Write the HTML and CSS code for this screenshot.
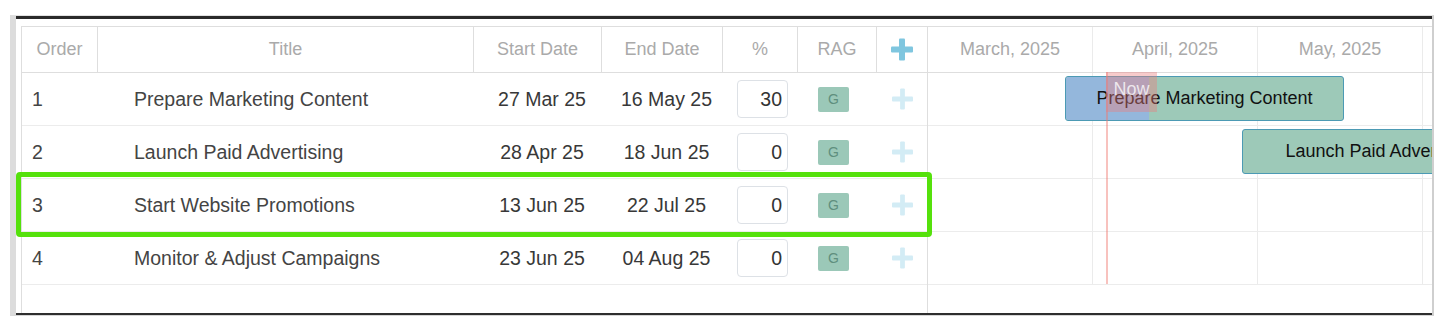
FILE: index.html
```html
<!DOCTYPE html>
<html lang="en">
<head>
    <meta charset="UTF-8">
    <title>Campaign Planner</title>
    <link rel="stylesheet" href="styles.css">
</head>
<body>
    <div class="frame">
        <div class="topbar"></div>
        <div class="content">
            <div class="planner">
                <div class="grid-side">
                    <div class="head">
                        <div class="cell c-order">Order</div>
                        <div class="cell c-title">Title</div>
                        <div class="cell c-date">Start Date</div>
                        <div class="cell c-date">End Date</div>
                        <div class="cell c-pct">%</div>
                        <div class="cell c-rag">RAG</div>
                        <div class="cell c-add">
                            <svg class="plus" viewBox="0 0 22 22" width="22" height="23"><rect x="8" y="0" width="6" height="22" rx="1"/><rect x="0" y="8" width="22" height="6" rx="1"/></svg>
                        </div>
                    </div>
                    <div class="row">
                        <div class="cell c-order">1</div>
                        <div class="cell c-title">Prepare Marketing Content</div>
                        <div class="cell c-date">27 Mar 25</div>
                        <div class="cell c-date">16 May 25</div>
                        <div class="cell c-pct"><input class="pct" type="text" value="30"></div>
                        <div class="cell c-rag"><span class="rag">G</span></div>
                        <div class="cell c-add"><svg class="plus light" viewBox="0 0 22 22" width="21" height="22"><rect x="8.5" y="0" width="5" height="22" rx="1"/><rect x="0" y="8.5" width="22" height="5" rx="1"/></svg></div>
                    </div>
                    <div class="row">
                        <div class="cell c-order">2</div>
                        <div class="cell c-title">Launch Paid Advertising</div>
                        <div class="cell c-date">28 Apr 25</div>
                        <div class="cell c-date">18 Jun 25</div>
                        <div class="cell c-pct"><input class="pct" type="text" value="0"></div>
                        <div class="cell c-rag"><span class="rag">G</span></div>
                        <div class="cell c-add"><svg class="plus light" viewBox="0 0 22 22" width="21" height="22"><rect x="8.5" y="0" width="5" height="22" rx="1"/><rect x="0" y="8.5" width="22" height="5" rx="1"/></svg></div>
                    </div>
                    <div class="row">
                        <div class="cell c-order">3</div>
                        <div class="cell c-title">Start Website Promotions</div>
                        <div class="cell c-date">13 Jun 25</div>
                        <div class="cell c-date">22 Jul 25</div>
                        <div class="cell c-pct"><input class="pct" type="text" value="0"></div>
                        <div class="cell c-rag"><span class="rag">G</span></div>
                        <div class="cell c-add"><svg class="plus light" viewBox="0 0 22 22" width="21" height="22"><rect x="8.5" y="0" width="5" height="22" rx="1"/><rect x="0" y="8.5" width="22" height="5" rx="1"/></svg></div>
                    </div>
                    <div class="row">
                        <div class="cell c-order">4</div>
                        <div class="cell c-title">Monitor &amp; Adjust Campaigns</div>
                        <div class="cell c-date">23 Jun 25</div>
                        <div class="cell c-date">04 Aug 25</div>
                        <div class="cell c-pct"><input class="pct" type="text" value="0"></div>
                        <div class="cell c-rag"><span class="rag">G</span></div>
                        <div class="cell c-add"><svg class="plus light" viewBox="0 0 22 22" width="21" height="22"><rect x="8.5" y="0" width="5" height="22" rx="1"/><rect x="0" y="8.5" width="22" height="5" rx="1"/></svg></div>
                    </div>
                </div>

                <div class="gantt">
                    <div class="months">
                        <div class="month">March, 2025</div>
                        <div class="month">April, 2025</div>
                        <div class="month">May, 2025</div>
                        <div class="month">June, 2025</div>
                    </div>
                    <div class="lanes">
                        <div class="lane">
                            <div class="mcell"></div><div class="mcell"></div><div class="mcell"></div><div class="mcell"></div>
                            <div class="bar" style="left: 137px; width: 279px;">
                                <div class="progress" style="width: 30%;"></div>
                                <span class="bar-label">Prepare Marketing Content</span>
                            </div>
                        </div>
                        <div class="lane">
                            <div class="mcell"></div><div class="mcell"></div><div class="mcell"></div><div class="mcell"></div>
                            <div class="bar" style="left: 314px; width: 280px;">
                                <span class="bar-label">Launch Paid Advertising</span>
                            </div>
                        </div>
                        <div class="lane">
                            <div class="mcell"></div><div class="mcell"></div><div class="mcell"></div><div class="mcell"></div>
                        </div>
                        <div class="lane">
                            <div class="mcell"></div><div class="mcell"></div><div class="mcell"></div><div class="mcell"></div>
                        </div>
                        <div class="now-line" style="left: 178px;"></div>
                        <div class="now-tag" style="left: 178px;">Now</div>
                    </div>
                </div>
            </div>
        </div>
        <div class="bottombar"></div>
        <div class="highlight"></div>
    </div>
</body>
</html>
```

FILE: styles.css
```css
body {
    margin: 0;
    font-family: "Liberation Sans", Arial, sans-serif;
    background: #fff;
}
.frame {
    position: relative;
    margin: 15px 0 0 10px;
    width: 1416px;
    border-left: 6px solid #dcdcdc;
    border-right: 2px solid #cfcfcf;
    border-top: 1px solid #e2e2e2;
    border-bottom: 1px solid #d6d6d6;
}
.topbar {
    height: 3px;
    background: #2a2a2a;
}
.bottombar {
    height: 2px;
    background: #2e2e2e;
}
.content {
    padding: 7px 0 0 5px;
}
.planner {
    display: flex;
    height: 286px;
    border-top: 1px solid #dedede;
    overflow: hidden;
}
.grid-side {
    width: 906px;
    flex: none;
    box-sizing: border-box;
    border-left: 1px solid #dedede;
}
.head, .row {
    display: grid;
    grid-template-columns: 76px 376px 128px 121px 75px 79px 50px;
}
.head {
    height: 46px;
    box-sizing: border-box;
    border-bottom: 1px solid #dedede;
}
.head .cell {
    box-sizing: border-box;
    border-right: 1px solid #dedede;
    justify-content: center;
    font-size: 18px;
    color: #aaa;
}
.head .cell.c-add {
    border-right: none;
}
.row {
    height: 53px;
    box-sizing: border-box;
    border-bottom: 1px solid #ececec;
}
.cell {
    display: flex;
    align-items: center;
    font-size: 19.5px;
    color: #444;
    white-space: nowrap;
}
.row .c-order { padding-left: 10px; }
.row .c-title { padding-left: 36px; }
.row .c-date { justify-content: center; padding-left: 8px; color: #383838; }
.row .c-pct { padding-left: 14px; }
.row .c-rag { padding-left: 20px; }
.head .c-add, .row .c-add { justify-content: center; padding-left: 0; }
.pct {
    width: 51px;
    height: 38px;
    box-sizing: border-box;
    border: 1px solid #dde1e6;
    border-radius: 4px;
    padding: 0 5px 0 0;
    text-align: right;
    font-family: inherit;
    font-size: 19.5px;
    color: #333;
    background: #fff;
}
.rag {
    display: inline-flex;
    align-items: center;
    justify-content: center;
    width: 31px;
    height: 25px;
    border-radius: 2px;
    background: #9bc8b8;
    color: #5f8f7e;
    font-size: 14px;
}
.plus { fill: #7fc6df; }
.plus.light { fill: #d3ecf5; }

.gantt {
    flex: 1;
    min-width: 0;
    border-left: 1px solid #dedede;
    overflow: hidden;
}
.months {
    display: flex;
    height: 46px;
    box-sizing: border-box;
    border-bottom: 1px solid #dedede;
}
.month, .mcell {
    width: 165px;
    flex: none;
    box-sizing: border-box;
    border-right: 1px solid #ebebeb;
}
.month {
    display: flex;
    align-items: center;
    justify-content: center;
    font-size: 18px;
    color: #aaa;
    white-space: nowrap;
}
.lanes {
    position: relative;
}
.lane {
    position: relative;
    display: flex;
    height: 53px;
    box-sizing: border-box;
    border-bottom: 1px solid #ececec;
}
.bar {
    position: absolute;
    top: 3px;
    height: 45px;
    box-sizing: border-box;
    border: 1px solid #4c9ab4;
    border-radius: 3px;
    background: #9dc9b8;
    overflow: hidden;
    display: flex;
    align-items: center;
    justify-content: center;
}
.progress {
    position: absolute;
    left: 0;
    top: 0;
    bottom: 0;
    background: #94b7dc;
}
.bar-label {
    position: relative;
    font-size: 18px;
    color: #111;
    white-space: nowrap;
}
.now-line {
    position: absolute;
    top: -1px;
    height: 212px;
    width: 2px;
    background: rgba(240, 120, 110, 0.45);
}
.now-tag {
    position: absolute;
    top: -1px;
    width: 51px;
    height: 40px;
    background: rgba(235, 125, 125, 0.4);
    color: rgba(255, 255, 255, 0.75);
    font-size: 18px;
    line-height: 34px;
    text-align: center;
}
.highlight {
    position: absolute;
    left: 0;
    top: 156px;
    width: 916px;
    height: 65px;
    box-sizing: border-box;
    border: 5px solid #55e10c;
    border-radius: 4px;
}
```
